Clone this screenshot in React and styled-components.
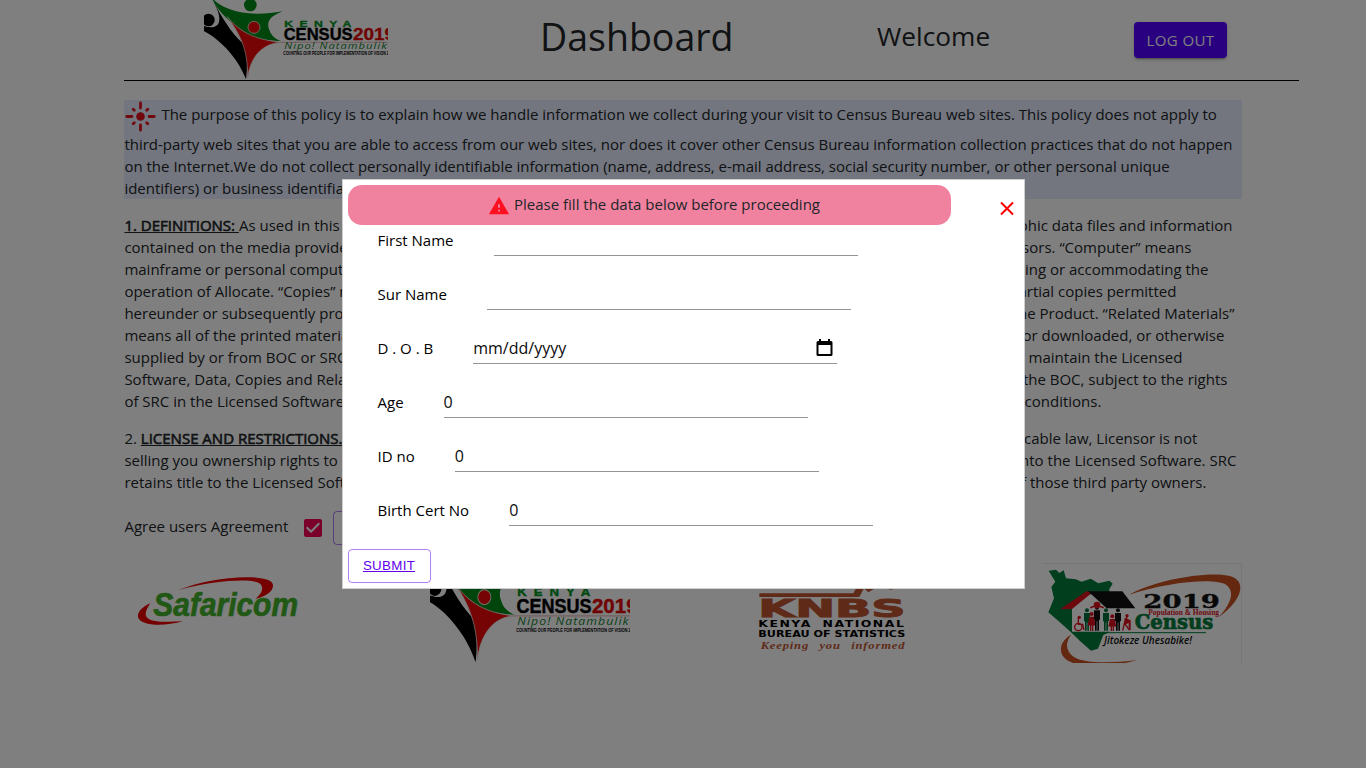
import React from "react";
import styled, { createGlobalStyle } from "styled-components";

const GlobalStyle = createGlobalStyle`
  *, *::before, *::after { box-sizing: border-box; }
  html, body { height: 100%; }
  body {
    margin: 0;
    overflow: hidden;
    background: #fff;
    color: #212529;
    font-family: "Open Sans", sans-serif;
    font-size: 15px;
    line-height: 22px;
  }
  p { margin: 0; }
`;

const Page = styled.div`
  width: 1118px;
  margin-left: 124.4px;
`;

const Header = styled.header`
  display: flex;
  align-items: flex-start;
  width: 1175px;
  height: 81px;
  padding-left: 79.6px;
  border-bottom: 1px solid #000;
`;

const HeaderLogo = styled.div`
  flex: none;
  width: 184px;
  height: 80px;
`;

const Title = styled.h1`
  margin: 13px 0 0 152px;
  width: 337px;
  font-size: 37.5px;
  font-weight: 400;
  line-height: 48px;
`;

const Welcome = styled.div`
  width: 257px;
  margin-top: 20px;
  font-size: 26.3px;
  line-height: 32px;
`;

const LogOut = styled.button`
  width: 93px;
  height: 36px;
  margin-top: 22px;
  padding: 0;
  border: 0;
  border-radius: 4px;
  background: #5200ff;
  color: #fff;
  font: 400 15px/36px "Open Sans", sans-serif;
  letter-spacing: 0.4px;
  box-shadow: 0 3px 1px -2px rgba(0, 0, 0, 0.2), 0 2px 2px rgba(0, 0, 0, 0.14), 0 1px 5px rgba(0, 0, 0, 0.12);
`;

const Notice = styled.section`
  margin-top: 19px;
  background: #e6ecfc;
`;

const NoticeLead = styled.div`
  display: flex;
  height: 33px;
  padding-top: 3px;
`;

const FlareIcon = styled.svg`
  flex: none;
  width: 33px;
  height: 33px;
  margin: -3px 4px 0 0;
`;

const Clause = styled.section`
  margin-top: ${(p) => p.$gap || 16}px;
`;

const Row = styled.div`
  display: flex;
  height: 22px;
  padding-right: ${(p) => p.$end || 0}px;
  white-space: nowrap;
`;

const Tail = styled.span`
  margin-left: auto;
`;

const Term = styled.b`
  font-weight: 400;
  -webkit-text-stroke: 0.6px #212529;
  text-decoration: underline;
`;

const Agreement = styled.div`
  display: flex;
  height: 34px;
  margin-top: 18px;
`;

const AgreementText = styled.span`
  margin-top: 4px;
`;

const CheckBox = styled.svg`
  width: 24px;
  height: 24px;
  margin: 5px 8px 0 12.3px;
`;

const Outlined = styled.button`
  display: block;
  width: ${(p) => p.$width}px;
  height: 34px;
  padding: 0;
  border: 1px solid rgba(98, 0, 238, 0.5);
  border-radius: 4px;
  background: transparent;
  color: #6200ee;
  font: 400 13.33px/32px "Liberation Sans", Arial, sans-serif;
  letter-spacing: 0.3px;
  text-decoration: underline;
`;

const Partners = styled.footer`
  display: flex;
  justify-content: space-between;
  margin: 18px 0 0 -0.4px;
`;

const Partner = styled.div`
  width: 200px;
  height: 100px;
`;

const Art = styled.svg`
  display: block;
  width: 100%;
  height: 100%;
  overflow: hidden;
`;

const Overlay = styled.div`
  position: fixed;
  inset: 0;
  display: flex;
  align-items: center;
  justify-content: center;
  background: rgba(0, 0, 0, 0.5);
`;

const Dialog = styled.div`
  width: 50%;
  height: 410px;
  padding: 5px;
  border: 1px solid #cecece;
  background: #fff;
`;

const DialogTop = styled.div`
  display: flex;
  height: 40px;
`;

const Alert = styled.div`
  display: flex;
  justify-content: center;
  width: 603px;
  padding: 8px 0 0 10px;
  border-radius: 14px;
  background: #f1829f;
`;

const AlertIcon = styled.svg`
  width: 22px;
  height: 22px;
  margin: 2px 4px 0 0;
`;

const Close = styled.button`
  width: 24px;
  height: 24px;
  margin: 12px 0 0 44px;
  padding: 0;
  border: 0;
  background: none;
  svg { display: block; }
`;

const Field = styled.label`
  display: flex;
  height: 54px;
  padding-left: 30px;
  color: #000;
`;

const FieldName = styled.span`
  padding-top: 4px;
  margin-right: 40px;
`;

const FieldBox = styled.span`
  display: flex;
  justify-content: space-between;
  width: 364px;
  height: 31px;
  padding: 3px 4px 0 0;
  border-bottom: 1px solid #949494;
  color: #0c0c0c;
  font-size: 16px;
  line-height: 24px;
`;

const Calendar = styled.svg`
  width: 17px;
  height: 18px;
  margin-top: 3px;
`;

function CensusLogo() {
  return (
    <Art viewBox="0 0 184 80" preserveAspectRatio="none">
      <g transform="translate(-14 0) scale(.33333)">
        <circle cx="55" cy="60" r="19" fill="#000" />
        <path d="M42 94C80 112 140 165 168 238C173 195 173 155 158 130C120 95 95 50 70 4C78 22 92 44 87 66C82 84 62 84 42 78Z" fill="#000" />
        <path d="M72 0C105 32 180 53 278 34C240 48 228 66 238 90C244 108 258 118 274 124C238 122 195 118 165 96C120 68 88 38 68 0Z" fill="#008a18" />
        <circle cx="181" cy="15" r="19" fill="#008a18" />
        <path d="M112 50C140 84 178 118 274 127C216 130 180 172 173 234C174 160 158 112 112 50Z" fill="#ee0808" stroke="#e8e8e0" strokeWidth="2" />
        <circle cx="192" cy="82" r="18" fill="#ee0808" stroke="#e8e8e0" strokeWidth="2.5" />
        <path d="M272 127H594" stroke="#d27070" strokeWidth="1.5" />
        <g fontFamily="Liberation Sans, sans-serif" fontWeight="700">
          <g transform="translate(283 80) scale(1.35 1)">
            <text fontSize="27" textLength="149" fill="#009222" stroke="#009222">KENYA</text>
          </g>
          <text x="281" y="121" fontSize="47" textLength="207" lengthAdjust="spacingAndGlyphs" fill="#000" stroke="#000">CENSUS</text>
          <text x="489" y="121" fontSize="47" textLength="126" lengthAdjust="spacingAndGlyphs" fill="#e00808" stroke="#e00808">2019</text>
          <text x="280" y="165" fontSize="14" textLength="322" lengthAdjust="spacingAndGlyphs" fill="#000">COUNTING OUR PEOPLE FOR IMPLEMENTATION OF VISION 20</text>
        </g>
        <g transform="translate(283 148) scale(1.35 1)">
          <text fontSize="25" fontStyle="italic" fontFamily="Open Sans, sans-serif" textLength="242" fill="#158030">Nipo! Natambulike</text>
        </g>
      </g>
    </Art>
  );
}

function SafaricomLogo() {
  return (
    <Art viewBox="0 0 200 100">
      <g transform="translate(-14 -83) scale(.33333)">
        <path d="M203 331C275 302 370 287 440 293C475 296 494 305 488 323C483 339 462 350 437 356C455 340 463 325 451 312C438 296 330 296 203 331Z" fill="#e80000" />
        <path d="M121 370C98 380 82 395 84 411C90 437 158 441 219 424C165 427 120 427 109 410C103 399 113 382 121 370Z" fill="#e80000" />
        <text x="130" y="408" fontFamily="Liberation Sans, sans-serif" fontSize="97" fontWeight="700" fontStyle="italic" textLength="434" lengthAdjust="spacingAndGlyphs" fill="#43b02a" stroke="#43b02a" strokeWidth="2">Safaricom</text>
      </g>
    </Art>
  );
}

function KnbsLogo() {
  return (
    <Art viewBox="0 0 200 100">
      <g transform="translate(4 12) scale(.33333)">
        <path d="M58 55H340L352 34L400 10L460 46L435 40L412 36L385 52L372 40L358 66H58Z" fill="#bf5430" />
        <text x="55" y="126" fontFamily="DejaVu Sans, sans-serif" fontWeight="700" fontSize="74" textLength="442" lengthAdjust="spacingAndGlyphs" fill="#bf5430" stroke="#bf5430" strokeWidth="3">KNBS</text>
        <g fontFamily="DejaVu Sans, sans-serif" fontWeight="700" fontSize="25" fill="#000">
          <text x="55" y="156" textLength="441" lengthAdjust="spacingAndGlyphs" wordSpacing="10" letterSpacing="3">KENYA NATIONAL</text>
          <text x="55" y="186" textLength="441" lengthAdjust="spacingAndGlyphs">BUREAU OF STATISTICS</text>
        </g>
        <text x="62" y="222" fontFamily="Liberation Serif, serif" fontWeight="700" fontStyle="italic" fontSize="31" textLength="434" lengthAdjust="spacingAndGlyphs" wordSpacing="16" letterSpacing="2" fill="#bf5430">Keeping you informed</text>
      </g>
    </Art>
  );
}

function Person({ x, y = 172, h = 55, color, skirt }) {
  return (
    <g fill={color}>
      <circle cx={x} cy={y - 6} r="6" />
      <path
        d={
          skirt
            ? `M${x - 7} ${y + 2}h14l5 ${h * 0.6}h-7v${h * 0.38}h-4v-${h * 0.38}h-2v${h * 0.38}h-4v-${h * 0.38}h-7z`
            : `M${x - 9} ${y + 2}h18v${h * 0.45}h-3v${h * 0.52}h-5v-${h * 0.45}h-2v${h * 0.45}h-5v-${h * 0.52}h-3z`
        }
      />
    </g>
  );
}

function Census2019Logo() {
  return (
    <Art viewBox="0 0 200 100">
      <path d="M0 .5H200M199.500 0V100" stroke="#ececec" />
      <g transform="translate(-12 -8) scale(.33333)">
        <path d="M56 47L78 44L88 54L101 46L108 70L137 73L155 80L182 71L205 85L238 77L248 86L238 102L238 232L220 240L204 281L183 287L150 258L128 236L88 200L55 172L72 130L64 96L76 80Z" fill="#007c3c" />
        <path d="M298 119C370 78 520 48 596 62C650 74 643 130 566 187C602 148 618 108 586 88C545 67 400 85 298 119Z" fill="#c85020" />
        <path d="M124 238C82 264 80 308 132 325C190 342 275 329 322 315C250 324 163 327 132 306C106 287 105 264 124 238Z" fill="#c85020" />
        <path d="M126 160L170 118L275 118L300 160V230H126Z" fill="#fff" />
        <path d="M90 163L170 109L188 112L126 162Z" fill="#d8101c" />
        <path d="M174 109H277L316 160H230Z" fill="#111" />
        <path d="M126 233H528" stroke="#007c3c" strokeWidth="3" />
        <g fill="none" stroke="#d8101c" strokeWidth="4">
          <circle cx="145" cy="216" r="11" />
          <path d="M145 187V208H158L162 225M292 184L284 205L297 224M284 202L278 227" />
        </g>
        <Person x={171} color="#00703a" />
        <Person x={185} y={183} h={44} color="#d8101c" skirt />
        <Person x={201} y={164} h={63} color="#111" />
        <Person x={228} color="#00703a" />
        <Person x={247} y={190} h={37} color="#d8101c" skirt />
        <Person x={264} color="#111" />
        <circle cx="201" cy="150" r="10" fill="#d8101c" />
        <path d="M181 158Q201 148 221 158" stroke="#d8101c" strokeWidth="5" fill="none" />
        <circle cx="148" cy="187" r="5" fill="#d8101c" />
        <circle cx="291" cy="182" r="5" fill="#d8101c" />
        <path d="M284 188L302 196V226H296V204L282 210Z" fill="#d8101c" />
        <g fontFamily="DejaVu Serif, serif" fontWeight="700">
          <text x="340" y="159" fontSize="55" textLength="230" lengthAdjust="spacingAndGlyphs" fill="#111" stroke="#111">2019</text>
          <text x="314" y="221" fontSize="61" textLength="236" lengthAdjust="spacingAndGlyphs" fill="#007c3c" stroke="#007c3c" strokeWidth="2">Census</text>
        </g>
        <text x="355" y="181" fontFamily="Liberation Serif, serif" fontWeight="700" fontSize="26" textLength="212" lengthAdjust="spacingAndGlyphs" fill="#d8101c">Population &amp; Housing</text>
        <text x="222" y="266" fontFamily="Open Sans, sans-serif" fontWeight="600" fontStyle="italic" fontSize="31" textLength="264" lengthAdjust="spacingAndGlyphs" fill="#111">Jitokeze Uhesabike!</text>
      </g>
    </Art>
  );
}

const definitions = [
  ["contained on the media provided with", "its licensors. “Computer” means", 51],
  ["mainframe or personal computers", "storing or accommodating the", 34],
  ["operation of Allocate. “Copies” means", "or partial copies permitted", 66],
  ["hereunder or subsequently provided", "of the Product. “Related Materials”", 8],
  ["means all of the printed materials", "or downloaded, or otherwise", 18],
  ["supplied by or from BOC or SRC and", "maintain the Licensed", 60],
  ["Software, Data, Copies and Related", "the BOC, subject to the rights", 15],
  ["of SRC in the Licensed Software,", "conditions.", 141],
];

const restrictions = [
  ["selling you ownership rights to the", "into the Licensed Software. SRC", 6],
  ["retains title to the Licensed Software", "of those third party owners.", 36],
];

const fields = [
  { name: "First Name" },
  { name: "Sur Name" },
  { name: "D . O . B", value: "mm/dd/yyyy", date: true },
  { name: "Age", value: "0" },
  { name: "ID no", value: "0" },
  { name: "Birth Cert No", value: "0" },
];

function Lines({ items }) {
  return items.map(([lead, tail, end]) => (
    <Row key={lead} $end={end}>
      <span>{lead}</span>
      <Tail>{tail}</Tail>
    </Row>
  ));
}

export default function App() {
  return (
    <>
      <GlobalStyle />
      <Page>
        <Header>
          <HeaderLogo><CensusLogo /></HeaderLogo>
          <Title>Dashboard</Title>
          <Welcome>Welcome</Welcome>
          <LogOut>LOG OUT</LogOut>
        </Header>

        <Notice>
          <NoticeLead>
            <FlareIcon viewBox="-16.500 -16.500 33 33">
              <circle r="4.300" fill="#e0101c" />
              <path
                d="M0-8.500V-13.700M0 8.500V13.700M-8.500 0H-13.700M8.500 0H13.700M-6.200-6.200L-7.300-7.300M6.200-6.200L7.300-7.300M-6.200 6.200L-7.300 7.300M6.200 6.200L7.300 7.300"
                stroke="#e0101c"
                strokeWidth="2.800"
                strokeLinecap="round"
              />
            </FlareIcon>
            <Row>The purpose of this policy is to explain how we handle information we collect during your visit to Census Bureau web sites. This policy does not apply to</Row>
          </NoticeLead>
          <Row>third-party web sites that you are able to access from our web sites, nor does it cover other Census Bureau information collection practices that do not happen</Row>
          <Row>on the Internet.We do not collect personally identifiable information (name, address, e-mail address, social security number, or other personal unique</Row>
          <Row>identifiers) or business identifiable</Row>
        </Notice>

        <Clause $gap={15}>
          <Row $end={10}>
            <span><Term>1. DEFINITIONS: </Term>As used in this</span>
            <Tail>geographic data files and information</Tail>
          </Row>
          <Lines items={definitions} />
        </Clause>

        <Clause $gap={15}>
          <Row $end={45}>
            <span>2. <Term>LICENSE AND RESTRICTIONS.</Term></span>
            <Tail>applicable law, Licensor is not</Tail>
          </Row>
          <Lines items={restrictions} />
        </Clause>

        <Agreement>
          <AgreementText>Agree users Agreement</AgreementText>
          <CheckBox viewBox="0 0 24 24">
            <path fill="#f50057" d="M19 3H5c-1.110 0-2 .9-2 2v14c0 1.100.89 2 2 2h14c1.110 0 2-.9 2-2V5c0-1.100-.89-2-2-2zm-9 14l-5-5 1.410-1.410L10 14.170l7.590-7.590L19 8l-9 9z" />
          </CheckBox>
          <Outlined $width={90} />
        </Agreement>

        <Partners>
          <Partner><SafaricomLogo /></Partner>
          <Partner><CensusLogo /></Partner>
          <Partner><KnbsLogo /></Partner>
          <Partner><Census2019Logo /></Partner>
        </Partners>
      </Page>

      <Overlay>
        <Dialog>
          <DialogTop>
            <Alert>
              <AlertIcon viewBox="0 0 24 24">
                <path fill="#ff1020" d="M1 21h22L12 2 1 21zm12-3h-2v-2h2v2zm0-4h-2v-4h2v4z" />
              </AlertIcon>
              <span>Please fill the data below before proceeding</span>
            </Alert>
            <Close aria-label="Close">
              <svg width="24" height="24" viewBox="0 0 24 24">
                <path d="M6 5.500L18 17.500M18 5.500L6 17.500" stroke="#f00" strokeWidth="2" />
              </svg>
            </Close>
          </DialogTop>
          {fields.map((f) => (
            <Field key={f.name}>
              <FieldName>{f.name}</FieldName>
              <FieldBox>
                {f.value}
                {f.date && (
                  <Calendar viewBox="0 0 17 18">
                    <path fill="#000" d="M3 0h2v2h7V0h2v2h1q1.500 0 1.500 1.500v12q0 1.500-1.500 1.500H2Q.5 17 .5 15.500v-12Q.5 2 2 2h1zM2.500 6v9h12V6z" />
                  </Calendar>
                )}
              </FieldBox>
            </Field>
          ))}
          <Outlined $width={83}>SUBMIT</Outlined>
        </Dialog>
      </Overlay>
    </>
  );
}
